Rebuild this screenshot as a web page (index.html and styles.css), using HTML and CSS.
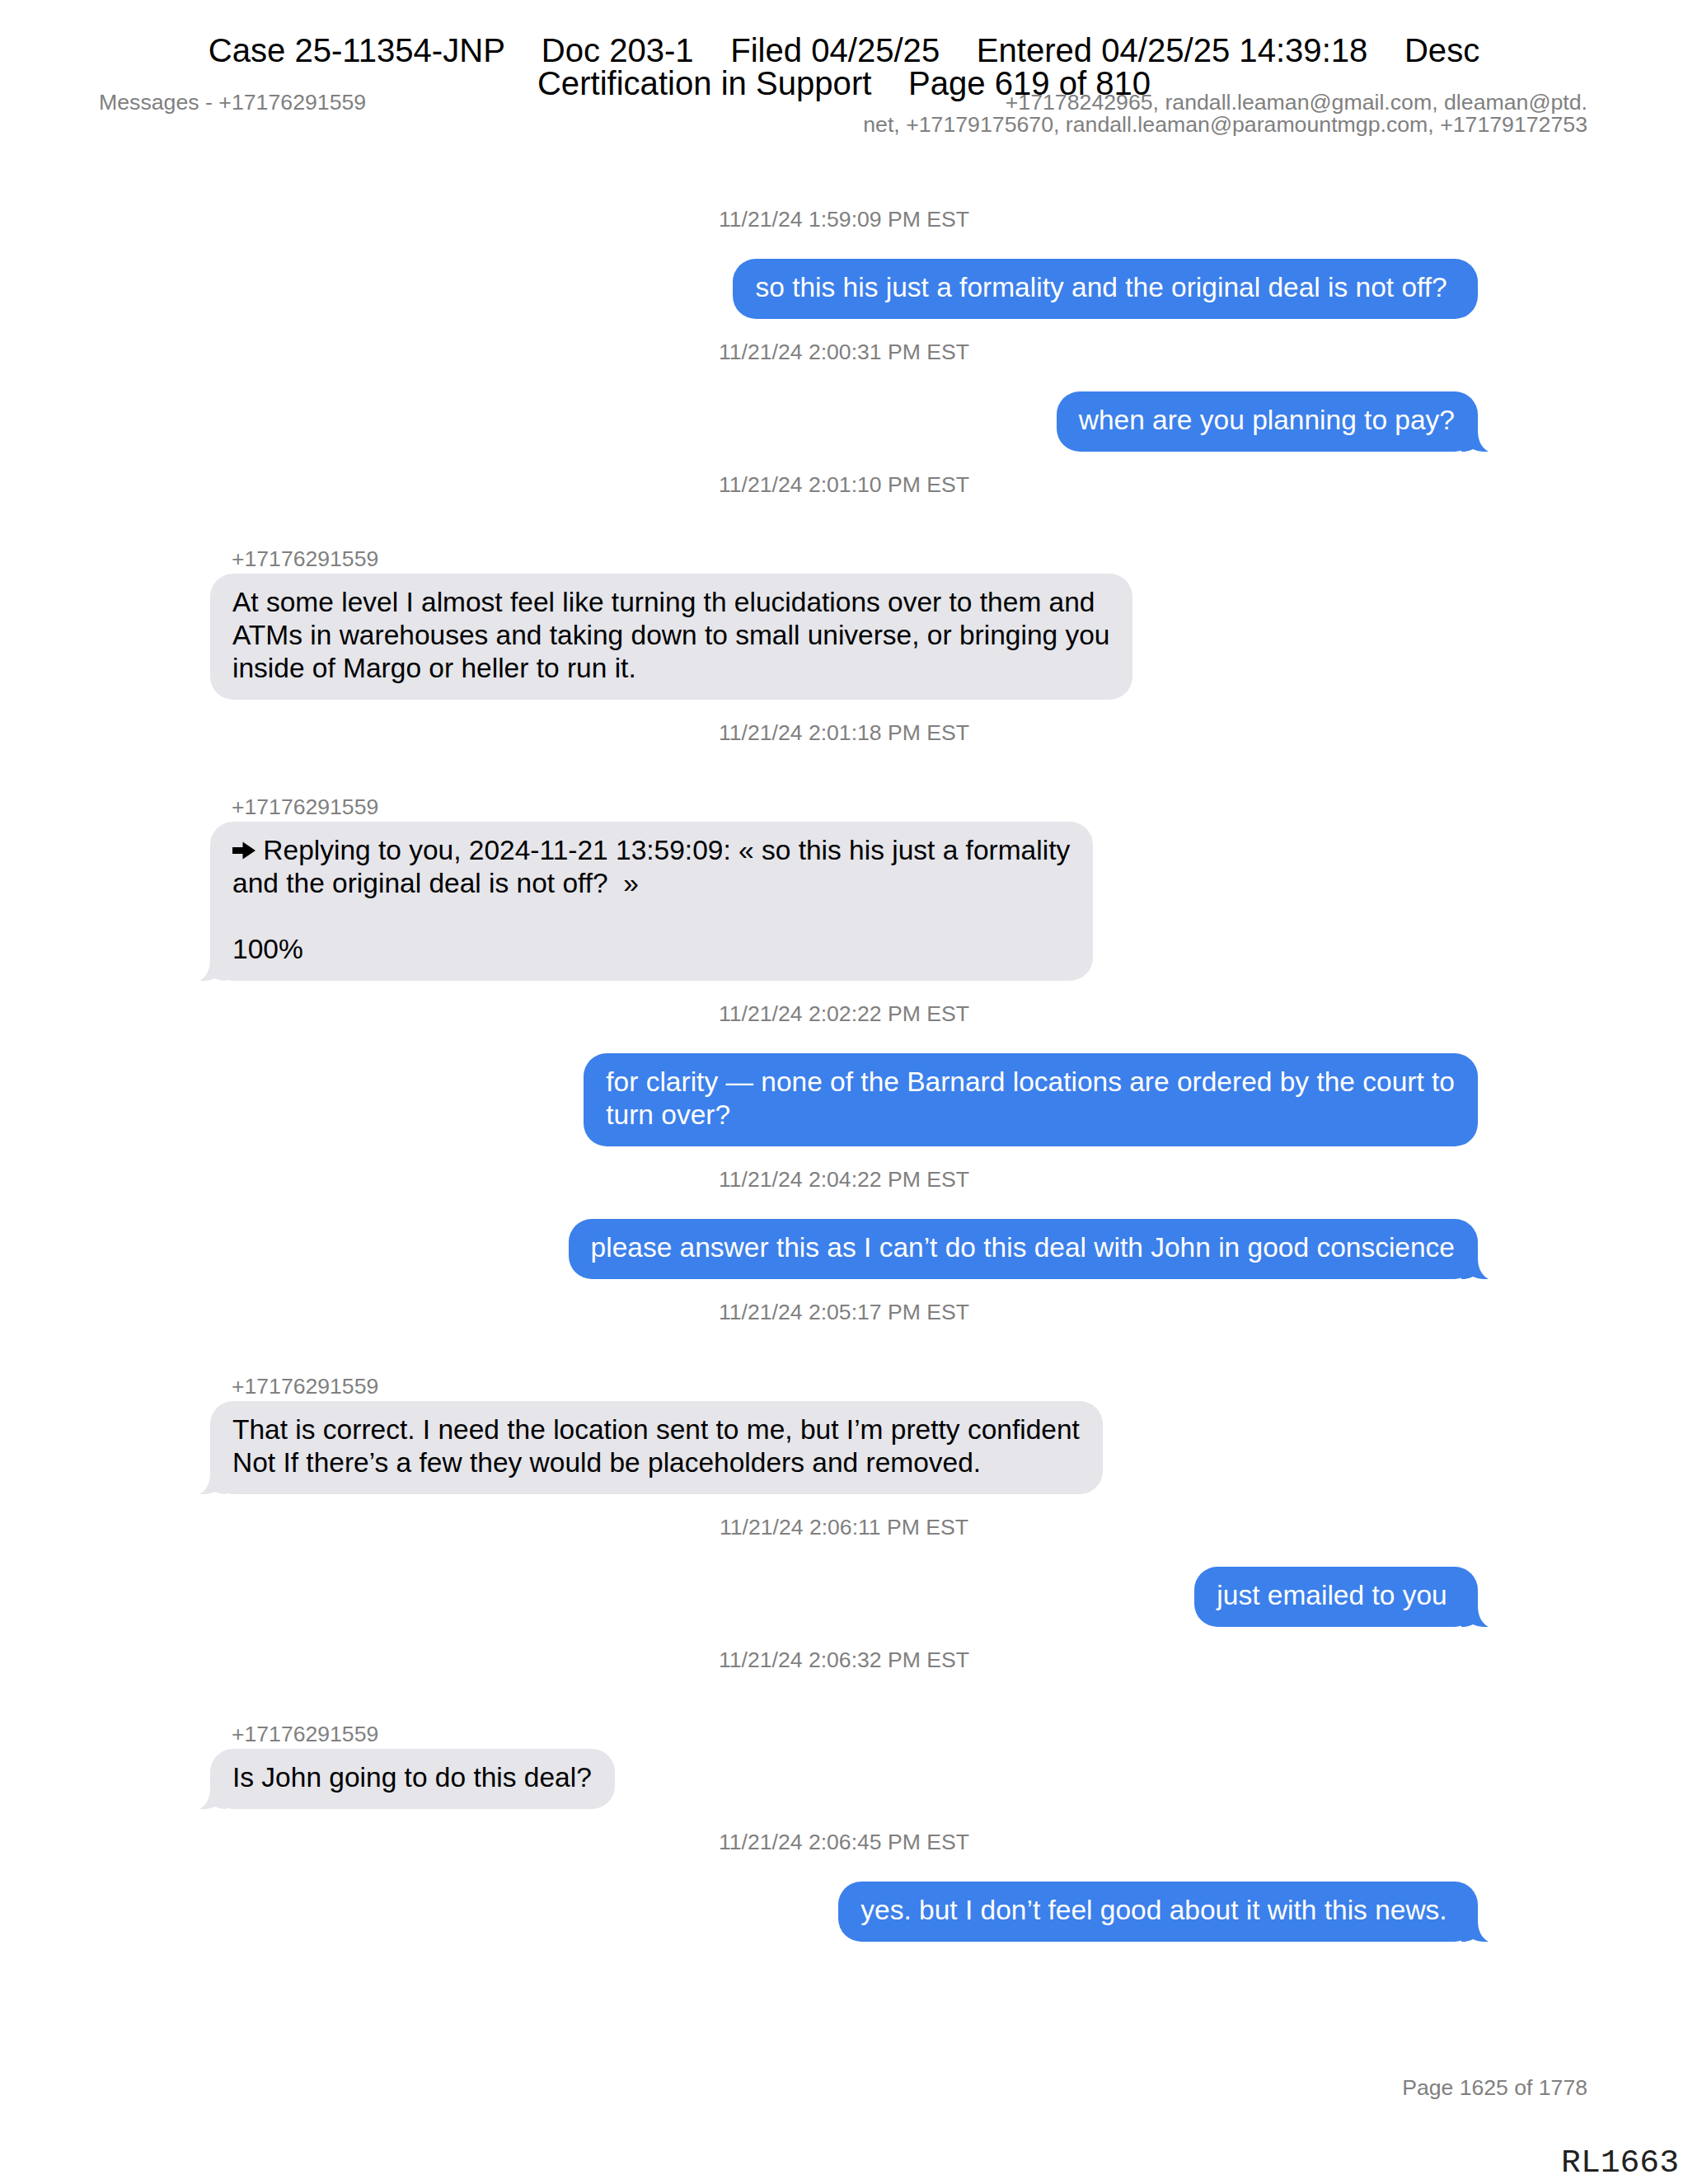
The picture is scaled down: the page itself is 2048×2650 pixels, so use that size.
FILE: index.html
```html
<!DOCTYPE html>
<html lang="en">
<head>
<meta charset="utf-8">
<title>Messages - +17176291559</title>
<link rel="stylesheet" href="styles.css">
</head>
<body>
<div class="page">
  <div class="stamp">Case 25-11354-JNP    Doc 203-1    Filed 04/25/25    Entered 04/25/25 14:39:18    Desc
Certification in Support    Page 619 of 810</div>

  <div class="meta">
    <div class="meta-left">Messages - +17176291559</div>
    <div class="meta-right">+17178242965, randall.leaman@gmail.com, dleaman@ptd.<br>net, +17179175670, randall.leaman@paramountmgp.com, +17179172753</div>
  </div>

  <div class="thread">
    <div class="ts">11/21/24 1:59:09 PM EST</div>
    <div class="msg out"><div class="bubble">so this his just a formality and the original deal is not off?&nbsp;</div></div>

    <div class="ts">11/21/24 2:00:31 PM EST</div>
    <div class="msg out"><div class="bubble">when are you planning to pay?<svg class="tail" viewBox="0 0 33 30"><path d="M0 0 H20 V4 C20 16 24 25 33 30 C26 30.5 19 29.5 14 27 C10 29 6 30 0 30 Z"/></svg></div></div>

    <div class="ts">11/21/24 2:01:10 PM EST</div>
    <div class="msg in"><div class="sender">+17176291559</div><div class="bubble">At some level I almost feel like turning th elucidations over to them and<br>ATMs in warehouses and taking down to small universe, or bringing you<br>inside of Margo or heller to run it.</div></div>

    <div class="ts">11/21/24 2:01:18 PM EST</div>
    <div class="msg in"><div class="sender">+17176291559</div><div class="bubble"><svg class="arrow" viewBox="0 0 28 22"><path d="M0 7 H12.5 V0.5 L28 11 L12.5 21.5 V15 H0 Z"/></svg> Replying to you, 2024-11-21 13:59:09: « so this his just a formality<br>and the original deal is not off?&nbsp; »<br><br>100%<svg class="tail" viewBox="0 0 33 30"><path d="M0 0 H20 V4 C20 16 24 25 33 30 C26 30.5 19 29.5 14 27 C10 29 6 30 0 30 Z"/></svg></div></div>

    <div class="ts">11/21/24 2:02:22 PM EST</div>
    <div class="msg out"><div class="bubble">for clarity — none of the Barnard locations are ordered by the court to<br>turn over?</div></div>

    <div class="ts">11/21/24 2:04:22 PM EST</div>
    <div class="msg out"><div class="bubble">please answer this as I can’t do this deal with John in good conscience<svg class="tail" viewBox="0 0 33 30"><path d="M0 0 H20 V4 C20 16 24 25 33 30 C26 30.5 19 29.5 14 27 C10 29 6 30 0 30 Z"/></svg></div></div>

    <div class="ts">11/21/24 2:05:17 PM EST</div>
    <div class="msg in"><div class="sender">+17176291559</div><div class="bubble">That is correct. I need the location sent to me, but I’m pretty confident<br>Not If there’s a few they would be placeholders and removed.<svg class="tail" viewBox="0 0 33 30"><path d="M0 0 H20 V4 C20 16 24 25 33 30 C26 30.5 19 29.5 14 27 C10 29 6 30 0 30 Z"/></svg></div></div>

    <div class="ts">11/21/24 2:06:11 PM EST</div>
    <div class="msg out"><div class="bubble">just emailed to you&nbsp;<svg class="tail" viewBox="0 0 33 30"><path d="M0 0 H20 V4 C20 16 24 25 33 30 C26 30.5 19 29.5 14 27 C10 29 6 30 0 30 Z"/></svg></div></div>

    <div class="ts">11/21/24 2:06:32 PM EST</div>
    <div class="msg in"><div class="sender">+17176291559</div><div class="bubble">Is John going to do this deal?<svg class="tail" viewBox="0 0 33 30"><path d="M0 0 H20 V4 C20 16 24 25 33 30 C26 30.5 19 29.5 14 27 C10 29 6 30 0 30 Z"/></svg></div></div>

    <div class="ts">11/21/24 2:06:45 PM EST</div>
    <div class="msg out"><div class="bubble">yes. but I don’t feel good about it with this news.&nbsp;<svg class="tail" viewBox="0 0 33 30"><path d="M0 0 H20 V4 C20 16 24 25 33 30 C26 30.5 19 29.5 14 27 C10 29 6 30 0 30 Z"/></svg></div></div>
  </div>

  <div class="footer">
    <div class="pageno">Page 1625 of 1778</div>
    <div class="bates">RL1663</div>
  </div>
</div>
</body>
</html>
```

FILE: styles.css
```css
html, body {
  margin: 0;
  padding: 0;
  background: #ffffff;
}

body {
  font-family: "Liberation Sans", Arial, Helvetica, sans-serif;
  color: #000000;
}

.page {
  position: relative;
  width: 2048px;
  height: 2650px;
  display: flex;
  flex-direction: column;
  overflow: hidden;
}

.stamp {
  position: absolute;
  top: 41px;
  left: 0;
  right: 0;
  text-align: center;
  font-size: 40.1px;
  line-height: 40px;
  white-space: pre;
  color: #000000;
  z-index: 2;
}

.meta {
  display: flex;
  justify-content: space-between;
  align-items: flex-start;
  padding: 111px 122px 0 120px;
  font-size: 26.7px;
  line-height: 27px;
  color: #808080;
}

.meta-right {
  text-align: right;
}

.thread {
  margin-left: 255px;
  width: 1538px;
  padding-top: 61px;
  display: flex;
  flex-direction: column;
}

.ts {
  margin-top: 25px;
  height: 30px;
  line-height: 30px;
  font-size: 26.6px;
  text-align: center;
  color: #808080;
}

.msg {
  display: flex;
  flex-direction: column;
}

.msg.out {
  align-self: flex-end;
  align-items: flex-end;
  margin-top: 33px;
}

.msg.in {
  align-self: flex-start;
  align-items: flex-start;
  margin-top: 60px;
}

.sender {
  padding-left: 26px;
  margin-bottom: 3px;
  font-size: 26.6px;
  line-height: 30px;
  height: 30px;
  color: #808080;
}

.bubble {
  position: relative;
  font-size: 33.5px;
  line-height: 40px;
  padding: 15px 28px 18px 27px;
  border-radius: 28px;
  white-space: nowrap;
}

.out .bubble {
  background: #3c80eb;
  color: #ffffff;
}

.in .bubble {
  background: #e5e5ea;
  color: #000000;
}

.arrow {
  width: 28px;
  height: 22px;
  vertical-align: baseline;
  fill: #000000;
}

.tail {
  position: absolute;
  bottom: 0;
  width: 33px;
  height: 30px;
  display: block;
}

.out .tail {
  right: -13px;
  fill: #3c80eb;
}

.in .tail {
  left: -13px;
  transform: scaleX(-1);
  fill: #e5e5ea;
}

.footer {
  margin-top: auto;
  padding-bottom: 5px;
  display: flex;
  flex-direction: column;
}

.pageno {
  text-align: right;
  padding-right: 122px;
  font-size: 26.6px;
  line-height: 27px;
  color: #808080;
}

.bates {
  text-align: right;
  padding-right: 11px;
  margin-top: 58px;
  font-family: "Liberation Mono", "Courier New", monospace;
  font-size: 39.7px;
  line-height: 40px;
  color: #222222;
}
```
